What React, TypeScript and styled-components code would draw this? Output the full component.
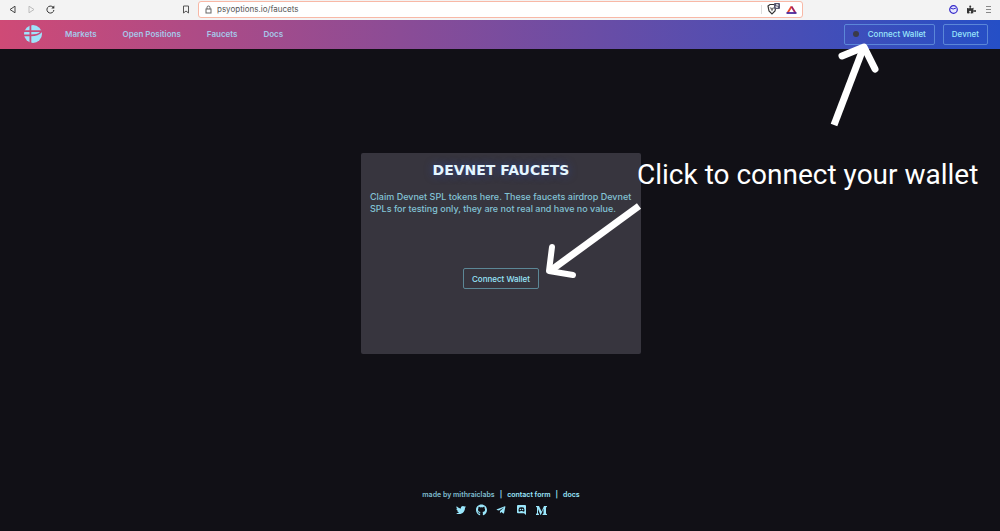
import React from "react";
import styled, { createGlobalStyle } from "styled-components";
import { FaTwitter, FaGithub, FaTelegramPlane, FaPuzzlePiece } from "react-icons/fa";

const ice = "#9ae6fb";

const GlobalStyle = createGlobalStyle`
  * { box-sizing: border-box; }
  body {
    margin: 0;
    background: #111016;
    font-family: Inter, "Liberation Sans", sans-serif;
  }
`;

const Page = styled.div`
  min-height: 100vh;
  display: flex;
  flex-direction: column;
  overflow: hidden;
`;

const BrowserBar = styled.div`
  height: 20px;
  display: flex;
  align-items: center;
  justify-content: space-between;
  background: #f3f3f3;
  color: #444;
  padding: 0 8px 2px 8px;
`;

const BarGroup = styled.div<{ $gap: number }>`
  display: flex;
  align-items: center;
  gap: ${(p) => p.$gap}px;
`;

const AddressArea = styled.div`
  flex: 0 1 621px;
  display: flex;
  align-items: center;
  gap: 8px;
  margin-left: 127px;
  margin-right: auto;
`;

const IconButton = styled.button`
  display: flex;
  padding: 0;
  border: 0;
  background: none;
  color: inherit;
`;

const AddressBox = styled.div`
  flex: 1;
  height: 17px;
  display: flex;
  align-items: center;
  gap: 5px;
  padding: 0 5px 0 6px;
  background: #fff;
  border: 1px solid #f8b8a6;
  border-radius: 3px;
`;

const AddressInput = styled.input`
  flex: 1;
  min-width: 0;
  padding: 0;
  border: 0;
  outline: 0;
  background: none;
  color: #555;
  font: 8px/12px Inter, sans-serif;
`;

const Divider = styled.span`
  width: 1px;
  height: 9px;
  background: #ddd;
`;

const Header = styled.header`
  height: 29px;
  display: flex;
  align-items: center;
  padding: 0 12px 1px 24px;
  background: linear-gradient(90deg, #cf4a76 0%, #254fc6 100%);
`;

const LogoLink = styled.a`
  display: flex;
  margin-right: 23px;
`;

const Nav = styled.nav`
  display: flex;
  gap: 26px;
  margin-right: auto;
`;

const NavLink = styled.a`
  color: #a6c8ea;
  font-size: 8px;
  line-height: 12px;
  font-weight: 600;
  text-decoration: none;
`;

const Actions = styled.div`
  display: flex;
  gap: 8px;
`;

const OutlineButton = styled.button`
  position: relative;
  height: 21px;
  display: flex;
  align-items: center;
  gap: 9px;
  padding: 0 8px;
  border: 1px solid #5b87d8;
  border-radius: 2px;
  background: none;
  color: ${ice};
  font: 500 8px/12px Inter, sans-serif;
  white-space: nowrap;
`;

const CardButton = styled(OutlineButton)`
  border-color: #5c8796;
`;

const StatusDot = styled.span`
  width: 6px;
  height: 6px;
  border-radius: 50%;
  background: #3b3b48;
`;

const Main = styled.main`
  flex: 1;
  display: flex;
  align-items: center;
  justify-content: center;
  padding: 16px 0 16px 2px;
`;

const Card = styled.section`
  position: relative;
  width: 280px;
  min-height: 201px;
  display: flex;
  flex-direction: column;
  align-items: center;
  padding: 9px;
  border-radius: 2px;
  background: #37353e;
`;

const Title = styled.h1`
  margin: 0;
  color: #e4f6ff;
  font: bold 14px/17px "DejaVu Sans", sans-serif;
  text-shadow: 0 0 8px #2f50d088;
`;

const Description = styled.p`
  align-self: stretch;
  margin: 12px 0 53px;
  color: #83c3d5;
  font-size: 9px;
  line-height: 12px;
  font-weight: 500;
  white-space: nowrap;
`;

const Callout = styled.span`
  position: absolute;
  left: 276px;
  top: 4px;
  color: #fff;
  font: 28px/36px Roboto, sans-serif;
  white-space: nowrap;
`;

const CardArrow = styled.svg`
  position: absolute;
  left: 179px;
  top: 47px;
  pointer-events: none;
`;

const WalletArrow = styled.svg`
  position: absolute;
  left: -17px;
  top: 13px;
  pointer-events: none;
`;

const Footer = styled.footer`
  display: flex;
  flex-direction: column;
  align-items: center;
  gap: 3px;
  padding: 31px 0 15px 2px;
  color: ${ice};
`;

const FooterLinks = styled.div`
  display: flex;
  gap: 5px;
  font-size: 7px;
  line-height: 12px;
  font-weight: 600;
`;

const FooterLink = styled.a<{ $dim?: boolean }>`
  color: ${(p) => (p.$dim ? "#7fbdd0" : ice)};
  text-decoration: none;
`;

const Social = styled.div`
  display: flex;
  align-items: center;
  gap: 9px;
`;

const SocialLink = styled.a`
  width: 11px;
  height: 12px;
  display: flex;
  align-items: center;
  justify-content: center;
  color: inherit;
`;

function Logo() {
  return (
    <svg width="18" height="18" viewBox="0 0 18 18">
      <defs>
        <clipPath id="disc"><circle cx="9" cy="9" r="9" /></clipPath>
      </defs>
      <g clipPath="url(#disc)" fill="#9fe3fb">
        <path d="M0 0H5.500V5.200H0zM0 7H5.500V9.500H0zM0 11.300H5.500V18H0z" />
        <path d="M7.300 0H18V5.200H7.300zM7.300 7H16C14 8.800 11 9.500 7.300 9.500zM7.300 11.300C12 11.300 15.500 10 18 7V18H7.300z" />
      </g>
    </svg>
  );
}

export default function App() {
  return (
    <>
      <GlobalStyle />
      <Page>
        <BrowserBar>
          <BarGroup $gap={11}>
            <IconButton aria-label="Back">
              <svg width="9" height="9" viewBox="0 0 9 9" fill="none" stroke="#444"><path d="M7 1.200V7.800L2 4.500z" /></svg>
            </IconButton>
            <IconButton aria-label="Forward">
              <svg width="7" height="9" viewBox="0 0 7 9" fill="none" stroke="#bbb"><path d="M1 1.200V7.800L6 4.500z" /></svg>
            </IconButton>
            <IconButton aria-label="Reload">
              <svg width="9" height="9" viewBox="0 0 9 9" fill="none" stroke="#333"><path d="M7 2.200A3.500 3.500 0 1 0 7.900 5" /><path d="M8.300 .5V3.500H5.300z" fill="#333" stroke="none" /></svg>
            </IconButton>
          </BarGroup>
          <AddressArea>
            <IconButton aria-label="Bookmark">
              <svg width="8" height="9" viewBox="0 0 8 9" fill="none" stroke="#555"><path d="M1.500 1H6.500V8L4 6L1.500 8z" /></svg>
            </IconButton>
            <AddressBox>
              <svg width="7" height="9" viewBox="0 0 7 9" fill="none" stroke="#666"><rect x="1" y="4" width="5" height="4" /><path d="M2 4V2.500A1.500 1.500 0 0 1 5 2.500V4" /></svg>
              <AddressInput aria-label="Address" defaultValue="psyoptions.io/faucets" />
              <Divider />
              <svg width="14" height="12" viewBox="0 0 14 12">
                <path d="M1 3L3 1.500H7L9 3L8 8L5 11L2 8z" fill="#fff" stroke="#333" strokeWidth="1.200" />
                <path d="M2.500 4L5 5L7.500 4L5 8.500z" fill="#777" />
                <rect x="7" y="0" width="6" height="6" rx="1" fill="#55566e" />
                <path d="M9 1.500H11V3H9V4.500H11" fill="none" stroke="#fff" strokeWidth=".7" />
              </svg>
              <svg width="11" height="9" viewBox="0 0 11 9" fill="none" strokeWidth="1.800">
                <path d="M5.500 1.500L1.500 8" stroke="#ee4a2a" />
                <path d="M5.500 1.500L9.500 8" stroke="#a3215f" />
                <path d="M.5 8H10.500" stroke="#4b2a9b" />
              </svg>
            </AddressBox>
          </AddressArea>
          <BarGroup $gap={9}>
            <svg width="9" height="9" viewBox="0 0 9 9"><circle cx="4.500" cy="4.500" r="3.800" fill="#e6e8ff" stroke="#3427c9" strokeWidth="1.200" /><path d="M1.500 3Q4 5 7 3" fill="none" stroke="#3427c9" /></svg>
            <FaPuzzlePiece size={9} color="#333" />
            <svg width="7" height="9" viewBox="0 0 7 9" stroke="#888"><path d="M1 1.500H6M1 4.500H6M1 7.500H6" /></svg>
          </BarGroup>
        </BrowserBar>

        <Header>
          <LogoLink href="#" aria-label="Home"><Logo /></LogoLink>
          <Nav>
            <NavLink href="#markets">Markets</NavLink>
            <NavLink href="#positions">Open Positions</NavLink>
            <NavLink href="#faucets">Faucets</NavLink>
            <NavLink href="#docs">Docs</NavLink>
          </Nav>
          <Actions>
            <OutlineButton>
              <StatusDot />
              Connect Wallet
              <WalletArrow width="56" height="92" viewBox="0 0 56 92" fill="none" stroke="#fff" strokeWidth="7">
                <path d="M6 87L35 11" />
                <path d="M14 18L36 9L47 31" strokeLinecap="round" strokeLinejoin="round" />
              </WalletArrow>
            </OutlineButton>
            <OutlineButton>Devnet</OutlineButton>
          </Actions>
        </Header>

        <Main>
          <Card>
            <Title>DEVNET FAUCETS</Title>
            <Description>
              Claim Devnet SPL tokens here. These faucets airdrop Devnet
              <br />
              SPLs for testing only, they are not real and have no value.
            </Description>
            <CardButton>Connect Wallet</CardButton>
            <Callout>Click to connect your wallet</Callout>
            <CardArrow width="106" height="82" viewBox="0 0 106 82" fill="none" stroke="#fff" strokeWidth="7">
              <path d="M99 6L10 71" />
              <path d="M12 47L9 71L33 75" strokeWidth="6" strokeLinecap="round" strokeLinejoin="round" />
            </CardArrow>
          </Card>
        </Main>

        <Footer>
          <FooterLinks>
            <FooterLink $dim href="#labs">made by mithraiclabs</FooterLink>
            <span>|</span>
            <FooterLink href="#contact">contact form</FooterLink>
            <span>|</span>
            <FooterLink href="#documentation">docs</FooterLink>
          </FooterLinks>
          <Social>
            <SocialLink href="#twitter" aria-label="Twitter"><FaTwitter size={10} /></SocialLink>
            <SocialLink href="#github" aria-label="GitHub"><FaGithub size={12} /></SocialLink>
            <SocialLink href="#telegram" aria-label="Telegram"><FaTelegramPlane size={10} /></SocialLink>
            <SocialLink href="#discord" aria-label="Discord">
              <svg width="9" height="10" viewBox="0 0 9 10">
                <path d="M1 0H8Q9 0 9 1V10L7 8.300H1Q0 8.300 0 7.300V1Q0 0 1 0z" fill="currentColor" />
                <path d="M1.500 6.300Q1.500 3.500 2.500 2.500Q4.500 1.800 6.500 2.500Q7.500 3.500 7.500 6.300L6 6.800L5.500 6H3.500L3 6.800z" fill="#111016" />
                <circle cx="3.400" cy="4.500" r=".8" fill="currentColor" />
                <circle cx="5.600" cy="4.500" r=".8" fill="currentColor" />
              </svg>
            </SocialLink>
            <SocialLink href="#medium" aria-label="Medium">
              <svg width="11" height="9" viewBox="0 0 11 9" fill="currentColor"><path d="M0 0H3L5.500 5.500L8 0H11V.8L10 1.500V7.500L11 8.200V9H6.500V8.200L7.500 7.500V2.500L4.800 9H4.500L2 3V7L3 8.200V9H0V8.200L1 7V1.500L0 .8z" /></svg>
            </SocialLink>
          </Social>
        </Footer>
      </Page>
    </>
  );
}
